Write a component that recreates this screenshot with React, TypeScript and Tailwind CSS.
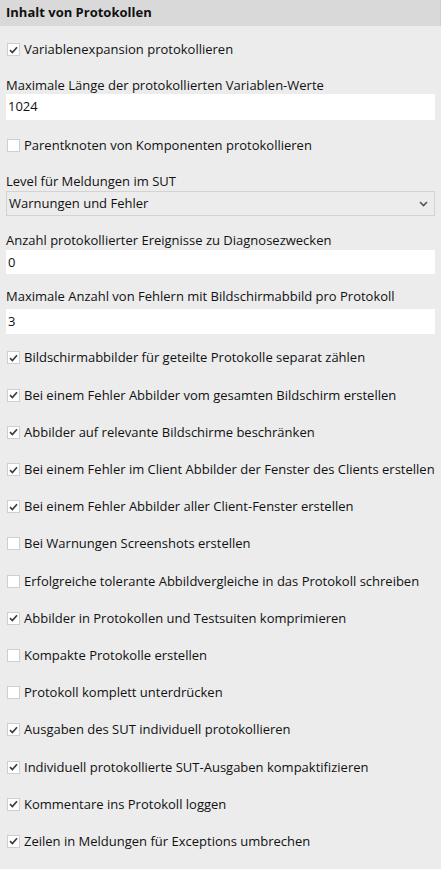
import React from 'react';

type Item =
  | { kind: 'check'; label: string; checked: boolean; mt?: string }
  | { kind: 'input'; label: string; value: string; wrap: string; inputCls: string }
  | { kind: 'select'; label: string; value: string; wrap: string; inputCls: string };

const items: Item[] = [
  { kind: 'check', label: 'Variablenexpansion protokollieren', checked: true },
  {
    kind: 'input',
    label: 'Maximale Länge der protokollierten Variablen-Werte',
    value: '1024',
    wrap: 'mt-[9px]',
    inputCls: 'h-[26px]',
  },
  { kind: 'check', label: 'Parentknoten von Komponenten protokollieren', checked: false, mt: 'mt-[7px]' },
  {
    kind: 'select',
    label: 'Level für Meldungen im SUT',
    value: 'Warnungen und Fehler',
    wrap: 'mt-[9px]',
    inputCls: 'h-[25px] mt-[1px]',
  },
  {
    kind: 'input',
    label: 'Anzahl protokollierter Ereignisse zu Diagnosezwecken',
    value: '0',
    wrap: 'mt-[16px]',
    inputCls: 'h-[24px] mt-[1px]',
  },
  {
    kind: 'input',
    label: 'Maximale Anzahl von Fehlern mit Bildschirmabbild pro Protokoll',
    value: '3',
    wrap: 'mt-[14px]',
    inputCls: 'h-[25px] mt-[4px]',
  },
  { kind: 'check', label: 'Bildschirmabbilder für geteilte Protokolle separat zählen', checked: true, mt: 'mt-[5px]' },
  { kind: 'check', label: 'Bei einem Fehler Abbilder vom gesamten Bildschirm erstellen', checked: true },
  { kind: 'check', label: 'Abbilder auf relevante Bildschirme beschränken', checked: true },
  { kind: 'check', label: 'Bei einem Fehler im Client Abbilder der Fenster des Clients erstellen', checked: true },
  { kind: 'check', label: 'Bei einem Fehler Abbilder aller Client-Fenster erstellen', checked: true },
  { kind: 'check', label: 'Bei Warnungen Screenshots erstellen', checked: false },
  { kind: 'check', label: 'Erfolgreiche tolerante Abbildvergleiche in das Protokoll schreiben', checked: false },
  { kind: 'check', label: 'Abbilder in Protokollen und Testsuiten komprimieren', checked: true },
  { kind: 'check', label: 'Kompakte Protokolle erstellen', checked: false },
  { kind: 'check', label: 'Protokoll komplett unterdrücken', checked: false },
  { kind: 'check', label: 'Ausgaben des SUT individuell protokollieren', checked: true },
  { kind: 'check', label: 'Individuell protokollierte SUT-Ausgaben kompaktifizieren', checked: true },
  { kind: 'check', label: 'Kommentare ins Protokoll loggen', checked: true },
  { kind: 'check', label: 'Zeilen in Meldungen für Exceptions umbrechen', checked: true },
];

function CheckBox({ checked }: { checked: boolean }) {
  return (
    <span className="w-[13px] h-[13px] shrink-0 bg-white border border-[#cfcfcf] flex items-center justify-center">
      {checked && (
        <svg width="9" height="8" viewBox="0 0 9 8">
          <path d="M1 4.2 L3.4 6.5 L8 1.3" fill="none" stroke="#3c3c3c" strokeWidth="1.7" />
        </svg>
      )}
    </span>
  );
}

export default function App() {
  return (
    <div
      className="w-[441px] h-[869px] bg-[#ececec] text-[#111] text-[13px] overflow-hidden"
      style={{ fontFamily: '"Open Sans", "Noto Sans", sans-serif' }}
    >
      {/* Section header */}
      <div className="h-[26px] bg-[#d9d9d9] border-r border-[#cfcfcf] flex items-center px-[6px] font-bold text-[13px]">
        Inhalt von Protokollen
      </div>

      <div className="pt-[5px] px-[6px]">
        {items.map((it, i) => {
          if (it.kind === 'check') {
            return (
              <div key={i} className={`h-[37.2px] flex items-center gap-[4px] pl-[1px] ${it.mt ?? ''}`}>
                <CheckBox checked={it.checked} />
                <span className="leading-none whitespace-nowrap">{it.label}</span>
              </div>
            );
          }
          return (
            <div key={i} className={it.wrap}>
              <div className="h-[17px] leading-[17px] whitespace-nowrap">{it.label}</div>
              {it.kind === 'input' ? (
                <div className={`bg-white flex items-center px-[2px] ${it.inputCls}`}>{it.value}</div>
              ) : (
                <div
                  className={`border border-[#d3d3d3] bg-[#ececec] flex items-center justify-between pl-[2px] pr-[6px] ${it.inputCls}`}
                >
                  <span>{it.value}</span>
                  <svg width="9" height="6" viewBox="0 0 9 6">
                    <path d="M1 1 L4.5 4.5 L8 1" fill="none" stroke="#555" strokeWidth="1.6" />
                  </svg>
                </div>
              )}
            </div>
          );
        })}
      </div>
    </div>
  );
}
